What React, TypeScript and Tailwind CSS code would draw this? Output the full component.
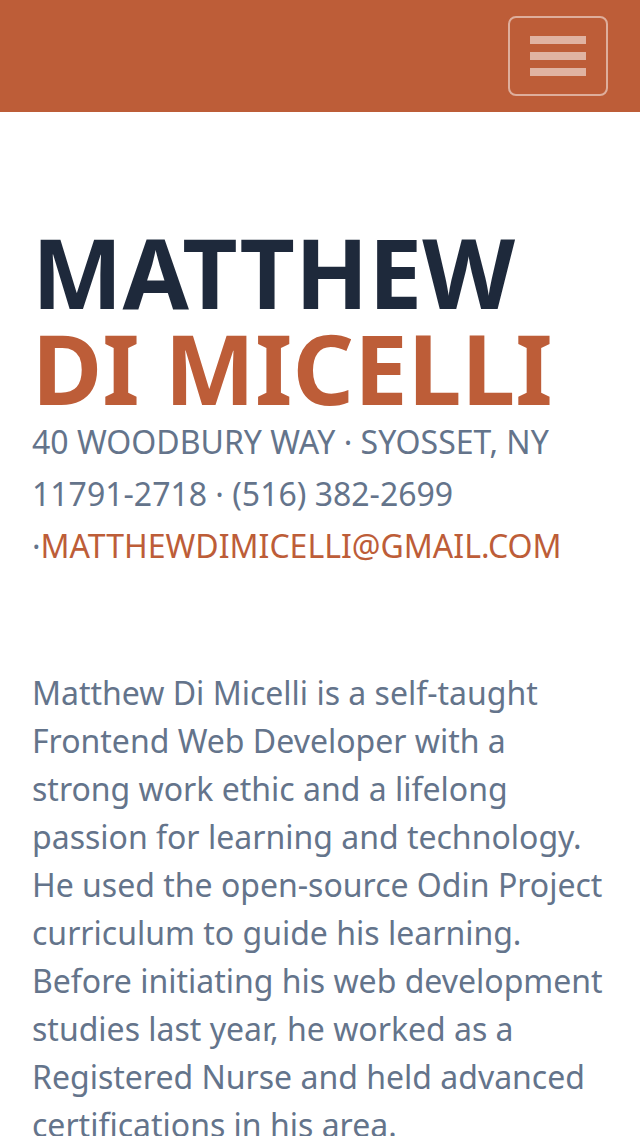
import React from "react";

export default function App() {
  return (
    <div className="min-h-[1136px] bg-white" style={{ fontFamily: '"Noto Sans", "Open Sans", sans-serif' }}>
      <nav className="h-[112px] bg-[#bd5d38] flex items-center justify-end px-[32px]">
        <button className="w-[100px] h-[80px] border-2 border-white/50 rounded-[8px] flex flex-col items-center justify-center gap-[8px]">
          <span className="block w-[56px] h-[8px] bg-[#e0b3a2]" />
          <span className="block w-[56px] h-[8px] bg-[#e0b3a2]" />
          <span className="block w-[56px] h-[8px] bg-[#e0b3a2]" />
        </button>
      </nav>
      <section className="px-[32px] pt-[112px]">
        <h1 className="text-[96px] leading-[96px] font-bold text-[#1e293b] uppercase">
          Matthew
          <br />
          <span className="text-[#bd5d38]">Di Micelli</span>
        </h1>
        <div className="text-[32px] leading-[52px] text-[#64748b] uppercase mb-[97px]">
          40 Woodbury Way · Syosset, NY 11791-2718 · (516) 382-2699 ·
          <a className="text-[#bd5d38]" href="#">matthewdimicelli@gmail.com</a>
        </div>
        <p className="text-[32px] leading-[48px] text-[#64748b]">
          Matthew Di Micelli is a self-taught Frontend Web Developer with a strong work ethic and a lifelong passion for
          learning and technology. He used the open-source Odin Project curriculum to guide his learning. Before
          initiating his web development studies last year, he worked as a Registered Nurse and held advanced
          certifications in his area.
        </p>
      </section>
    </div>
  );
}
